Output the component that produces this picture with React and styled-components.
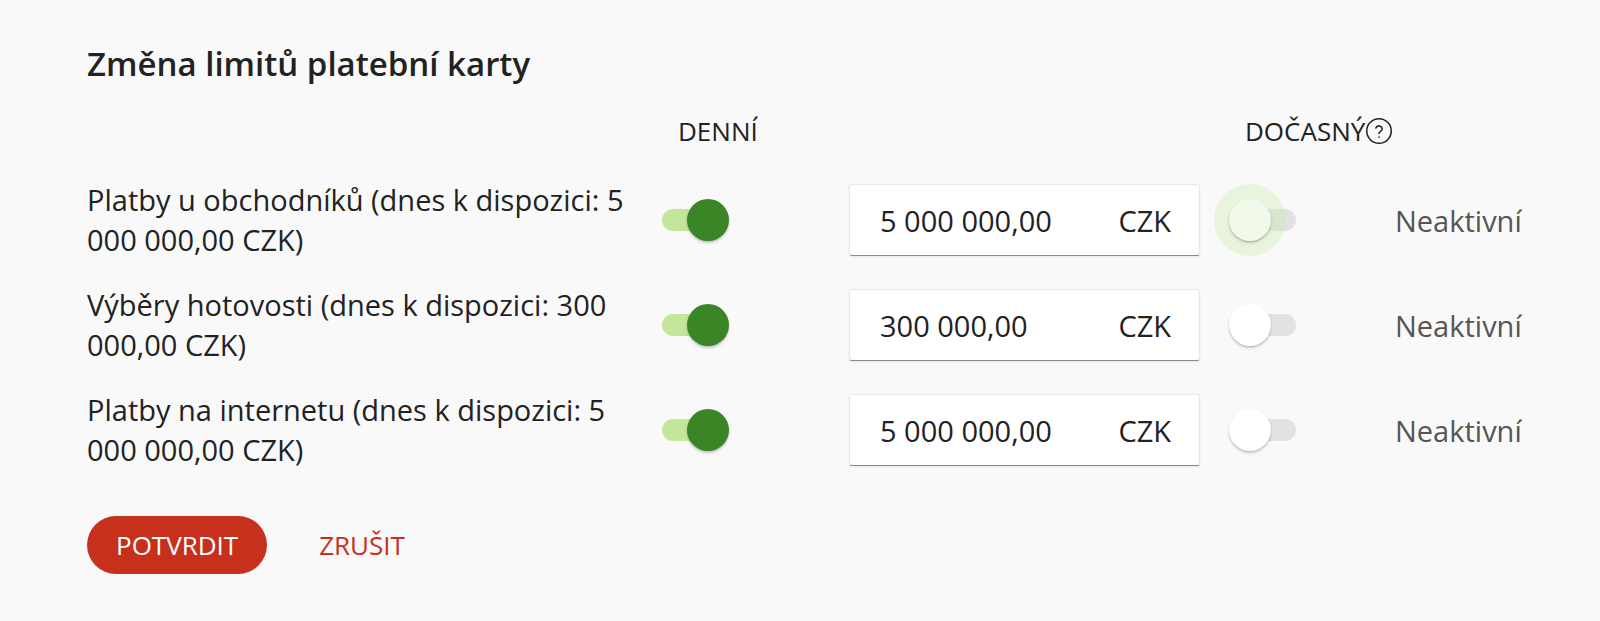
import React from "react";
import styled, { createGlobalStyle } from "styled-components";

const GlobalStyle = createGlobalStyle`
  html, body {
    margin: 0;
    padding: 0;
    background-color: #f9f9f9;
    font-family: "Open Sans", "Liberation Sans", sans-serif;
    color: #222;
  }
`;

const Page = styled.div`
  padding: 42px 0 0 87px;
  width: 1513px;
`;

const Title = styled.h1`
  margin: 0;
  font-size: 33px;
  line-height: 44px;
  font-weight: 600;
  color: #222;
`;

const Grid = styled.div`
  display: grid;
  grid-template-columns: 575px 187px 351px 195px auto;
  grid-auto-rows: 80px;
  row-gap: 25px;
  align-items: center;
`;

const HeadRow = styled.div`
  display: grid;
  grid-template-columns: 575px 187px 351px 195px auto;
  height: 40px;
  margin-top: 25px;
  margin-bottom: 29px;
  align-items: center;
`;

const HeadCell = styled.div`
  grid-column: ${(p) => p.$col};
  padding-left: ${(p) => p.$pad}px;
  font-size: 26px;
  line-height: 40px;
  text-transform: uppercase;
  display: flex;
  align-items: center;
  color: #222;
`;

const HelpIcon = styled.svg`
  width: 28px;
  height: 28px;
  margin-left: 0;
`;

const Label = styled.div`
  max-width: 562px;
  font-size: 29px;
  line-height: 40px;
  color: #222;
`;

const SwitchCell = styled.div`
  display: flex;
  align-items: center;
  padding-left: ${(p) => p.$pad || 0}px;
`;

const Track = styled.div`
  position: relative;
  width: 60px;
  height: 22px;
  border-radius: 11px;
  background-color: ${(p) => (p.$on ? "#c4e69b" : "#e2e2e2")};
`;

const Halo = styled.div`
  position: absolute;
  top: 50%;
  left: ${(p) => (p.$on ? 46 : 14)}px;
  width: 72px;
  height: 72px;
  margin: -36px 0 0 -36px;
  border-radius: 50%;
  background-color: rgba(200, 235, 170, 0.35);
`;

const Thumb = styled.div`
  position: absolute;
  top: 50%;
  left: ${(p) => (p.$on ? 46 : 14)}px;
  width: 42px;
  height: 42px;
  margin: -21px 0 0 -21px;
  border-radius: 50%;
  background-color: ${(p) => (p.$on ? "#3a8526" : p.$focus ? "#f1f9ea" : "#ffffff")};
  box-shadow: 0 2px 3px rgba(0, 0, 0, 0.18), 0 1px 1px rgba(0, 0, 0, 0.1);
`;

const AmountBox = styled.div`
  box-sizing: border-box;
  height: 72px;
  display: flex;
  align-items: center;
  justify-content: space-between;
  padding: 0 28px 0 30px;
  background-color: #fff;
  border: 1px solid #e8e8e8;
  border-bottom: 1px solid #8a8a8a;
  border-radius: 3px;
  box-shadow: 0 1px 2px rgba(0, 0, 0, 0.08);
  font-size: 29px;
  color: #222;
`;

const Status = styled.div`
  font-size: 29px;
  color: #555;
`;

const Actions = styled.div`
  display: flex;
  align-items: center;
  gap: 52px;
  margin-top: 46px;
`;

const PrimaryButton = styled.button`
  height: 58px;
  padding: 0 29px;
  border: none;
  border-radius: 29px;
  background-color: #c6301d;
  color: #fff;
  font-family: inherit;
  font-size: 26px;
  cursor: pointer;
`;

const TextButton = styled.button`
  padding: 0;
  border: none;
  background: none;
  color: #c6301d;
  font-family: inherit;
  font-size: 26px;
  cursor: pointer;
`;

const Switch = ({ on, focus, pad }) => (
  <SwitchCell $pad={pad}>
    <Track $on={on}>
      {focus && <Halo $on={on} />}
      <Thumb $on={on} $focus={focus} />
    </Track>
  </SwitchCell>
);

const rows = [
  { label: "Platby u obchodníků (dnes k dispozici: 5 000 000,00 CZK)", amount: "5 000 000,00", focus: true },
  { label: "Výběry hotovosti (dnes k dispozici: 300 000,00 CZK)", amount: "300 000,00" },
  { label: "Platby na internetu (dnes k dispozici: 5 000 000,00 CZK)", amount: "5 000 000,00" },
];

const App = () => {
  return (
    <Page>
      <GlobalStyle />
      <Title>Změna limitů platební karty</Title>
      <HeadRow>
        <HeadCell $col={2} $pad={16}>Denní</HeadCell>
        <HeadCell $col={4} $pad={45}>
          Dočasný
          <HelpIcon viewBox="0 0 24 24" fill="none" stroke="#222" strokeWidth="1.3" strokeLinecap="round">
            <circle cx="12" cy="12" r="10.5" />
            <path d="M9.3 9.4a2.8 2.8 0 0 1 5.4 0.9c0 1.9-2.7 2.3-2.7 3.9" />
            <circle cx="12" cy="17.3" r="0.7" fill="#222" stroke="none" />
          </HelpIcon>
        </HeadCell>
      </HeadRow>
      <Grid>
        {rows.map((row, i) => (
          <React.Fragment key={i}>
            <Label>{row.label}</Label>
            <Switch on />
            <AmountBox>
              <span>{row.amount}</span>
              <span>CZK</span>
            </AmountBox>
            <Switch pad={36} focus={row.focus} />
            <Status>Neaktivní</Status>
          </React.Fragment>
        ))}
      </Grid>
      <Actions>
        <PrimaryButton>POTVRDIT</PrimaryButton>
        <TextButton>ZRUŠIT</TextButton>
      </Actions>
    </Page>
  );
};

export default App;
